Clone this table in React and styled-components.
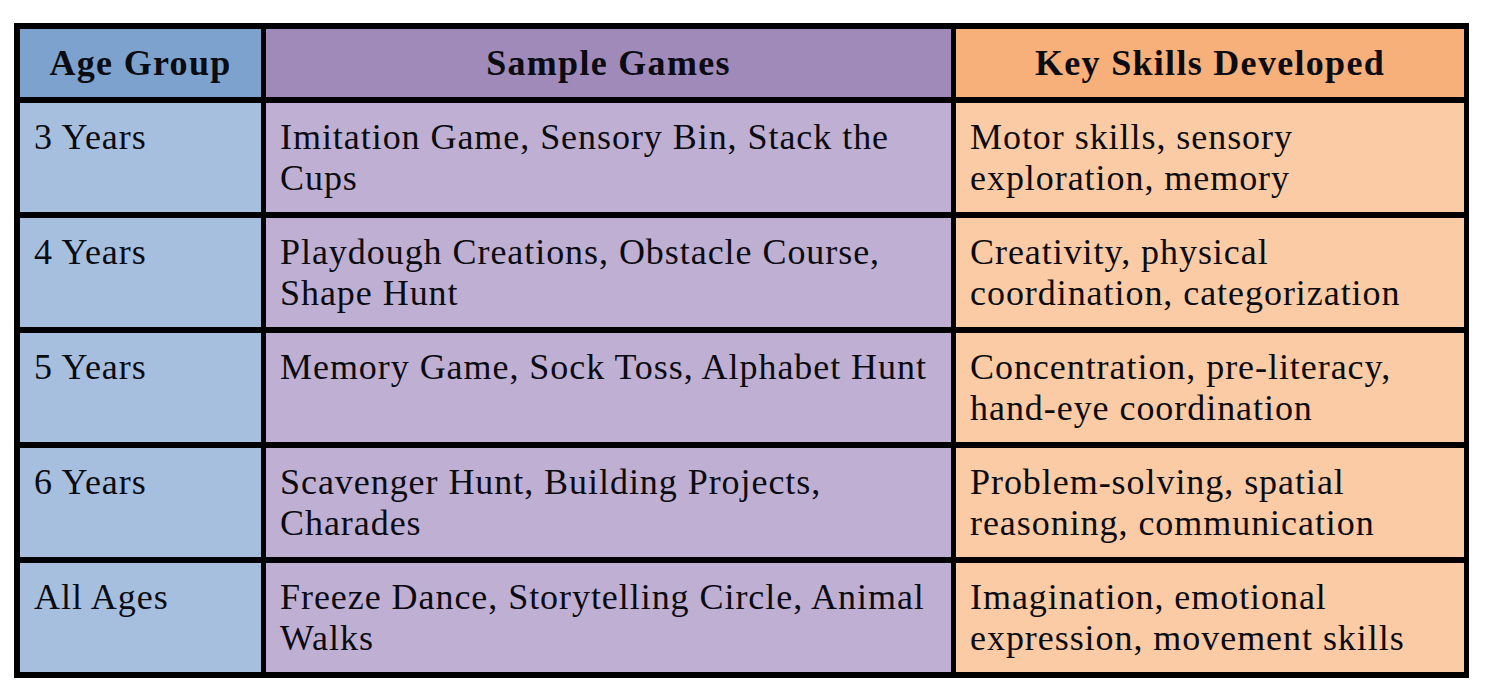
import styled, { createGlobalStyle } from 'styled-components';

const GlobalStyle = createGlobalStyle`
  html, body {
    margin: 0;
    padding: 0;
    background: #ffffff;
  }
  body {
    font-family: "Liberation Serif", "DejaVu Serif", serif;
    color: #0b0b12;
  }
`;

const Page = styled.div`
  width: 1489px;
  height: 699px;
  padding: 23px 0 0 14px;
  box-sizing: border-box;
`;

const Table = styled.div`
  display: grid;
  grid-template-columns: 241px 685px 508px;
  grid-template-rows: 68px repeat(5, 109px);
  gap: 6px 5px;
  padding: 6px 5px 6px 6px;
  width: max-content;
  background: #000000;
`;

const HeadCell = styled.div`
  display: flex;
  align-items: center;
  justify-content: center;
  background: ${(p) => p.$bg};
  font-weight: 700;
  font-size: 36px;
  letter-spacing: 1.3px;
`;

const Cell = styled.div`
  background: ${(p) => p.$bg};
  padding: 14px 14px 0 14px;
  font-size: 36px;
  line-height: 41px;
  letter-spacing: 0.95px;
  white-space: nowrap;
`;

const Line = styled.div``;

const headers = [
  { label: 'Age Group', bg: '#7da2cd' },
  { label: 'Sample Games', bg: '#a08aba' },
  { label: 'Key Skills Developed', bg: '#f7b07a' },
];

const bodyColors = ['#a7bfdf', '#bfb0d3', '#facba4'];

const rows = [
  [
    ['3 Years'],
    ['Imitation Game, Sensory Bin, Stack the', 'Cups'],
    ['Motor skills, sensory', 'exploration, memory'],
  ],
  [
    ['4 Years'],
    ['Playdough Creations, Obstacle Course,', 'Shape Hunt'],
    ['Creativity, physical', 'coordination, categorization'],
  ],
  [
    ['5 Years'],
    ['Memory Game, Sock Toss, Alphabet Hunt'],
    ['Concentration, pre-literacy,', 'hand-eye coordination'],
  ],
  [
    ['6 Years'],
    ['Scavenger Hunt, Building Projects,', 'Charades'],
    ['Problem-solving, spatial', 'reasoning, communication'],
  ],
  [
    ['All Ages'],
    ['Freeze Dance, Storytelling Circle, Animal', 'Walks'],
    ['Imagination, emotional', 'expression, movement skills'],
  ],
];

const App = () => {
  return (
    <Page>
      <GlobalStyle />
      <Table>
        {headers.map((h) => (
          <HeadCell key={h.label} $bg={h.bg}>
            {h.label}
          </HeadCell>
        ))}
        {rows.map((row, r) =>
          row.map((lines, c) => (
            <Cell key={`${r}-${c}`} $bg={bodyColors[c]}>
              {lines.map((l) => (
                <Line key={l}>{l}</Line>
              ))}
            </Cell>
          ))
        )}
      </Table>
    </Page>
  );
};

export default App;
